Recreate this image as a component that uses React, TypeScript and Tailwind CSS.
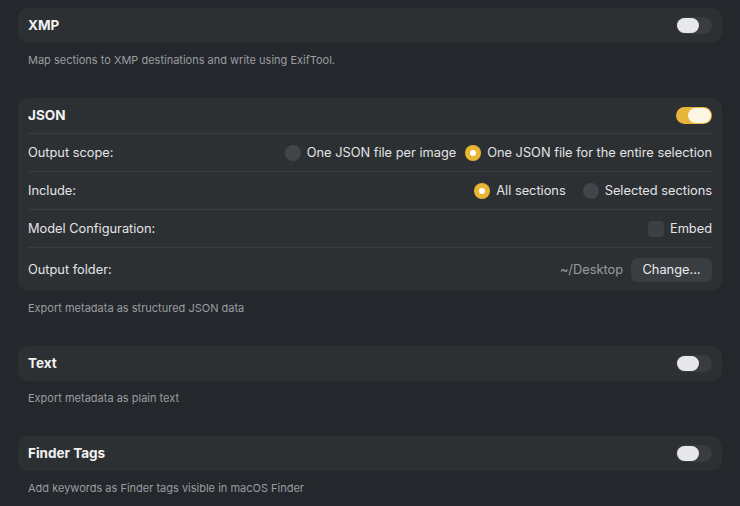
import React from "react";

function Toggle({ on }: { on: boolean }) {
  return on ? (
    <div className="flex h-[17px] w-[36px] items-center justify-end rounded-full bg-[#e7b53a] px-[1px]">
      <div className="h-[15px] w-[23px] rounded-full bg-[#fdf6e3]" />
    </div>
  ) : (
    <div className="flex h-[17px] w-[36px] items-center justify-start rounded-full bg-[#393c40] px-[1px]">
      <div className="h-[15px] w-[22px] rounded-full bg-[#e8e8ea]" />
    </div>
  );
}

function Radio({ checked, label }: { checked: boolean; label: string }) {
  return (
    <div className="flex items-center gap-[6px]">
      {checked ? (
        <div className="flex h-[16px] w-[16px] items-center justify-center rounded-full bg-[#e8b634]">
          <div className="h-[6px] w-[6px] rounded-full bg-white" />
        </div>
      ) : (
        <div className="h-[16px] w-[16px] rounded-full bg-[#424549]" />
      )}
      <span>{label}</span>
    </div>
  );
}

function Section({
  title,
  on,
  desc,
  children,
}: {
  title: string;
  on: boolean;
  desc: string;
  children?: React.ReactNode;
}) {
  return (
    <div className="flex flex-col">
      <div className="rounded-[10px] bg-[#2d3033] px-[10px]">
        <div className="flex h-[35px] items-center justify-between">
          <span className="text-[13.5px] font-bold text-[#f2f2f2]">{title}</span>
          <Toggle on={on} />
        </div>
        {children}
      </div>
      <div className="mt-[10px] h-[15px] px-[10px] text-[11px] leading-[15px] text-[#9b9da1]">{desc}</div>
    </div>
  );
}

export default function App() {
  return (
    <div
      className="flex min-h-screen flex-col gap-[30px] bg-[#24272c] px-[18px] pt-[8px] text-[12.8px] text-[#e4e4e6]"
      style={{ fontFamily: "Inter, 'Noto Sans', sans-serif" }}
    >
      <Section title="XMP" on={false} desc="Map sections to XMP destinations and write using ExifTool." />

      <Section title="JSON" on={true} desc="Export metadata as structured JSON data">
        <div className="flex h-[38px] items-center justify-between border-t border-[#3a3d41]">
          <span>Output scope:</span>
          <div className="flex items-center gap-[9px]">
            <Radio checked={false} label="One JSON file per image" />
            <Radio checked={true} label="One JSON file for the entire selection" />
          </div>
        </div>
        <div className="flex h-[38px] items-center justify-between border-t border-[#3a3d41]">
          <span>Include:</span>
          <div className="flex items-center gap-[17px]">
            <Radio checked={true} label="All sections" />
            <Radio checked={false} label="Selected sections" />
          </div>
        </div>
        <div className="flex h-[38px] items-center justify-between border-t border-[#3a3d41]">
          <span>Model Configuration:</span>
          <div className="flex items-center gap-[6px]">
            <div className="h-[16px] w-[16px] rounded-[4px] bg-[#3c3f43]" />
            <span>Embed</span>
          </div>
        </div>
        <div className="flex h-[44px] items-center justify-between border-t border-[#3a3d41]">
          <span>Output folder:</span>
          <div className="flex items-center gap-[8px]">
            <span className="text-[#9a9b9e]">~/Desktop</span>
            <div className="flex h-[24px] w-[81px] items-center justify-center rounded-[6px] bg-[#3a3d41] text-[#ececee]">
              Change...
            </div>
          </div>
        </div>
      </Section>

      <Section title="Text" on={false} desc="Export metadata as plain text" />

      <Section title="Finder Tags" on={false} desc="Add keywords as Finder tags visible in macOS Finder" />
    </div>
  );
}
